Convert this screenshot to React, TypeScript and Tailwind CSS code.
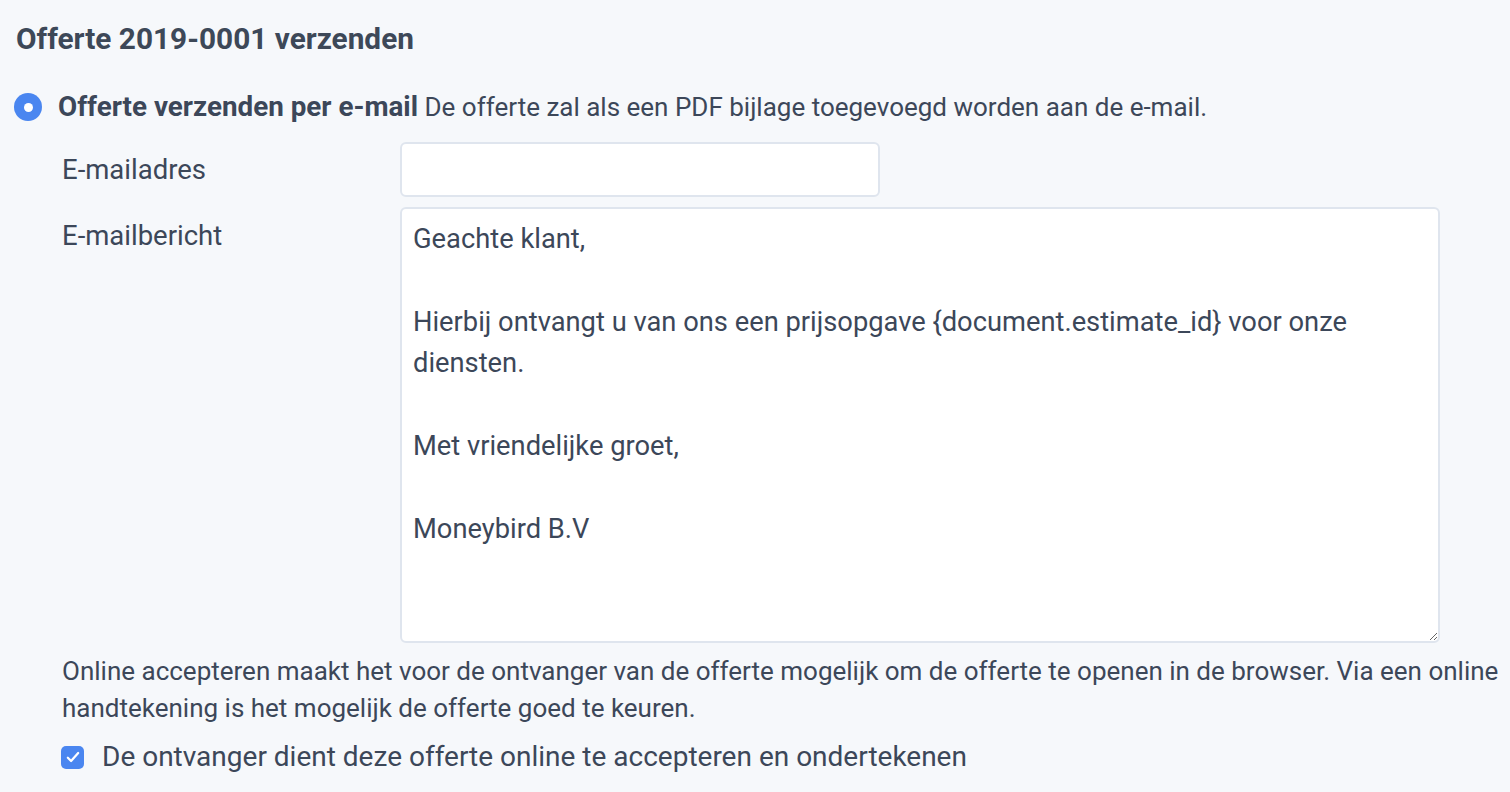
import { useState } from 'react';

const message = `Geachte klant,

Hierbij ontvangt u van ons een prijsopgave {document.estimate_id} voor onze diensten.

Met vriendelijke groet,

Moneybird B.V`;

function Radio() {
  return (
    <span className="w-[28px] h-[28px] rounded-full bg-[#4a86f0] flex items-center justify-center shrink-0">
      <span className="w-[9px] h-[9px] rounded-full bg-white" />
    </span>
  );
}

function Checkbox({ checked, onChange }: { checked: boolean; onChange: () => void }) {
  return (
    <button
      type="button"
      onClick={onChange}
      className={`w-[23px] h-[23px] rounded-[5px] flex items-center justify-center shrink-0 ${checked ? 'bg-[#4a86f0]' : 'bg-white border border-[#d6dde8]'}`}
    >
      {checked && (
        <svg width="18" height="18" viewBox="0 0 16 16" fill="none">
          <path d="M3.4 8.6l2.9 2.9 6.3-7" stroke="white" strokeWidth="2" strokeLinecap="round" strokeLinejoin="round" />
        </svg>
      )}
    </button>
  );
}

export default function App() {
  const [accept, setAccept] = useState(true);

  return (
    <div className="min-h-screen bg-[#f6f8fb] text-[#3c4759] font-['Roboto','Liberation_Sans',sans-serif] pl-[16px] pr-[6px] pt-[20px]">
      <h1 className="text-[29.8px] leading-[38px] font-bold text-[#3d4858]">Offerte 2019-0001 verzenden</h1>

      <div className="flex items-center gap-[16px] mt-[33px] ml-[-2px]">
        <Radio />
        <p className="text-[26px] leading-[32px] whitespace-nowrap">
          <span className="font-bold text-[27.8px]">Offerte verzenden per e-mail</span>{' '}
          De offerte zal als een PDF bijlage toegevoegd worden aan de e-mail.
        </p>
      </div>

      <div className="ml-[46px] mt-[19px] flex flex-col gap-[10px]">
        <div className="flex items-center">
          <label className="w-[338px] text-[27.5px] leading-[32px]">E-mailadres</label>
          <input
            type="text"
            className="w-[480px] h-[55px] bg-white border-2 border-[#dfe5ee] rounded-[6px] px-[12px] text-[27.5px] outline-none"
          />
        </div>
        <div className="flex items-start">
          <label className="w-[338px] text-[27.5px] leading-[32px] pt-[13px]">E-mailbericht</label>
          <textarea
            defaultValue={message}
            className="w-[1040px] h-[436px] bg-white border-2 border-[#dfe5ee] rounded-[6px] pl-[11px] pr-[20px] pt-[10px] text-[27.3px] leading-[41.4px] text-[#3c4759] outline-none"
          />
        </div>
      </div>

      <p className="ml-[46px] mt-[10px] text-[26px] leading-[37px]">
        Online accepteren maakt het voor de ontvanger van de offerte mogelijk om de offerte te openen in de browser. Via een online handtekening is het mogelijk de offerte goed te keuren.
      </p>

      <div className="ml-[45px] mt-[14px] flex items-center gap-[18px]">
        <Checkbox checked={accept} onChange={() => setAccept(!accept)} />
        <span className="text-[28px] leading-[32px]">De ontvanger dient deze offerte online te accepteren en ondertekenen</span>
      </div>
    </div>
  );
}
